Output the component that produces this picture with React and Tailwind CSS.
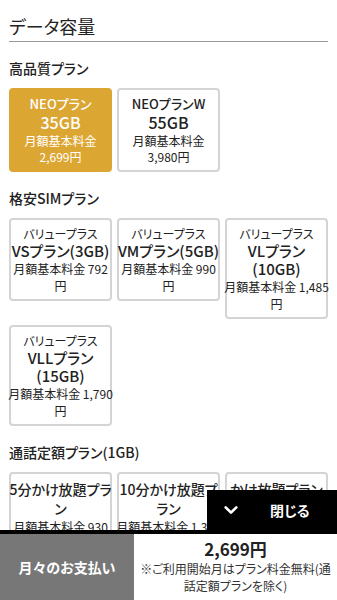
import React from "react";

const font = {
  fontFamily: '"Noto Sans CJK JP", "Noto Sans", sans-serif',
};

const highPlans = [
  { name: "NEOプラン", size: "35GB", price: "2,699円", active: true },
  { name: "NEOプランW", size: "55GB", price: "3,980円" },
];

const cheapPlans = [
  { sub: "バリュープラス", name: ["VSプラン(3GB)"], price: "月額基本料金 792" },
  { sub: "バリュープラス", name: ["VMプラン(5GB)"], price: "月額基本料金 990" },
  { sub: "バリュープラス", name: ["VLプラン", "(10GB)"], price: "月額基本料金 1,485" },
  { sub: "バリュープラス", name: ["VLLプラン", "(15GB)"], price: "月額基本料金 1,790" },
];

const callPlans = [
  { name: ["5分かけ放題プラ", "ン"], price: "月額基本料金 930" },
  { name: ["10分かけ放題プ", "ラン"], price: "月額基本料金 1,320" },
  { name: ["かけ放題プラン"], price: "月額基本料金 1,700" },
];

function SectionTitle({ children }) {
  return (
    <h3 className="mt-[16px] mb-[10px] text-[14px] font-medium leading-[20px] text-[#222]">
      {children}
    </h3>
  );
}

// price line: number stays with the label, 円 drops to the next line
function Price({ text }) {
  return (
    <div className="text-[12px] leading-[17px]">
      <span className="whitespace-nowrap">{text}</span>円
    </div>
  );
}

export default function App() {
  return (
    <div
      className="relative h-[600px] overflow-hidden bg-white text-[#222] [font-feature-settings:'palt']"
      style={font}
    >
      <div className="px-[9px] pt-[14px]">
        {/* Title */}
        <h2 className="border-b border-[#999] pb-[3px] text-[18px] leading-[24px] text-[#222]">
          データ容量
        </h2>

        <div className="mt-[16px]">
          <h3 className="mb-[10px] text-[14px] font-medium leading-[20px]">
            高品質プラン
          </h3>
          <div className="grid grid-cols-3 items-start gap-x-[5px] gap-y-[6px]">
            {highPlans.map((p) => (
              <div
                key={p.name}
                className={`flex h-[84px] flex-col items-center justify-center rounded-[4px] border-2 text-center ${
                  p.active
                    ? "border-[#dca632] bg-[#dca632] text-white"
                    : "border-[#d4d4d4] bg-white text-[#222]"
                }`}
              >
                <div className="text-[13px] font-medium leading-[18px]">
                  {p.name}
                </div>
                <div className="text-[16px] font-medium leading-[19px]">
                  {p.size}
                </div>
                <div className="text-[12px] leading-[17px]">月額基本料金</div>
                <div className="text-[12px] leading-[16px]">{p.price}</div>
              </div>
            ))}
          </div>
        </div>

        <SectionTitle>格安SIMプラン</SectionTitle>
        <div className="grid grid-cols-3 items-start gap-x-[5px] gap-y-[6px]">
          {cheapPlans.map((p) => (
            <div
              key={p.sub + p.name[0]}
              className="flex flex-col items-center rounded-[4px] border-2 border-[#d4d4d4] bg-white py-[5px] text-center"
            >
              <div className="text-[12px] leading-[17px]">{p.sub}</div>
              {p.name.map((line) => (
                <div
                  key={line}
                  className="whitespace-nowrap text-[15px] font-medium leading-[18px]"
                >
                  {line}
                </div>
              ))}
              <Price text={p.price} />
            </div>
          ))}
        </div>

        <SectionTitle>通話定額プラン(1GB)</SectionTitle>
        <div className="grid grid-cols-3 items-start gap-x-[5px] gap-y-[6px]">
          {callPlans.map((p) => (
            <div
              key={p.name[0]}
              className="flex flex-col items-center rounded-[4px] border-2 border-[#d4d4d4] bg-white py-[6px] text-center"
            >
              {p.name.map((line) => (
                <div
                  key={line}
                  className="whitespace-nowrap text-[14px] font-medium leading-[19px]"
                >
                  {line}
                </div>
              ))}
              <Price text={p.price} />
            </div>
          ))}
        </div>
      </div>

      {/* Close button */}
      <button className="absolute bottom-[70px] right-0 flex h-[40px] w-[130px] items-center bg-black text-white">
        <svg
          className="ml-[16px] h-[16px] w-[16px]"
          viewBox="0 0 24 24"
          fill="none"
          stroke="currentColor"
          strokeWidth={4}
          strokeLinecap="round"
          strokeLinejoin="round"
        >
          <path d="M4 8l8 8 8-8" />
        </svg>
        <span className="ml-[31px] text-[14px] font-bold">閉じる</span>
      </button>

      {/* Bottom bar */}
      <div className="absolute bottom-0 left-0 right-0 flex h-[70px] border-t-4 border-black">
        <div className="flex w-[134px] items-center justify-center bg-[#777] text-[14px] font-bold text-white">
          月々のお支払い
        </div>
        <div className="flex flex-1 flex-col items-center justify-center bg-white pb-[2px] text-center">
          <div className="text-[17px] font-bold leading-[22px]">2,699円</div>
          <div className="px-[6px] text-[12px] leading-[17px] text-[#333]">
            ※ご利用開始月はプラン料金無料(通話定額プランを除く)
          </div>
        </div>
      </div>
    </div>
  );
}
